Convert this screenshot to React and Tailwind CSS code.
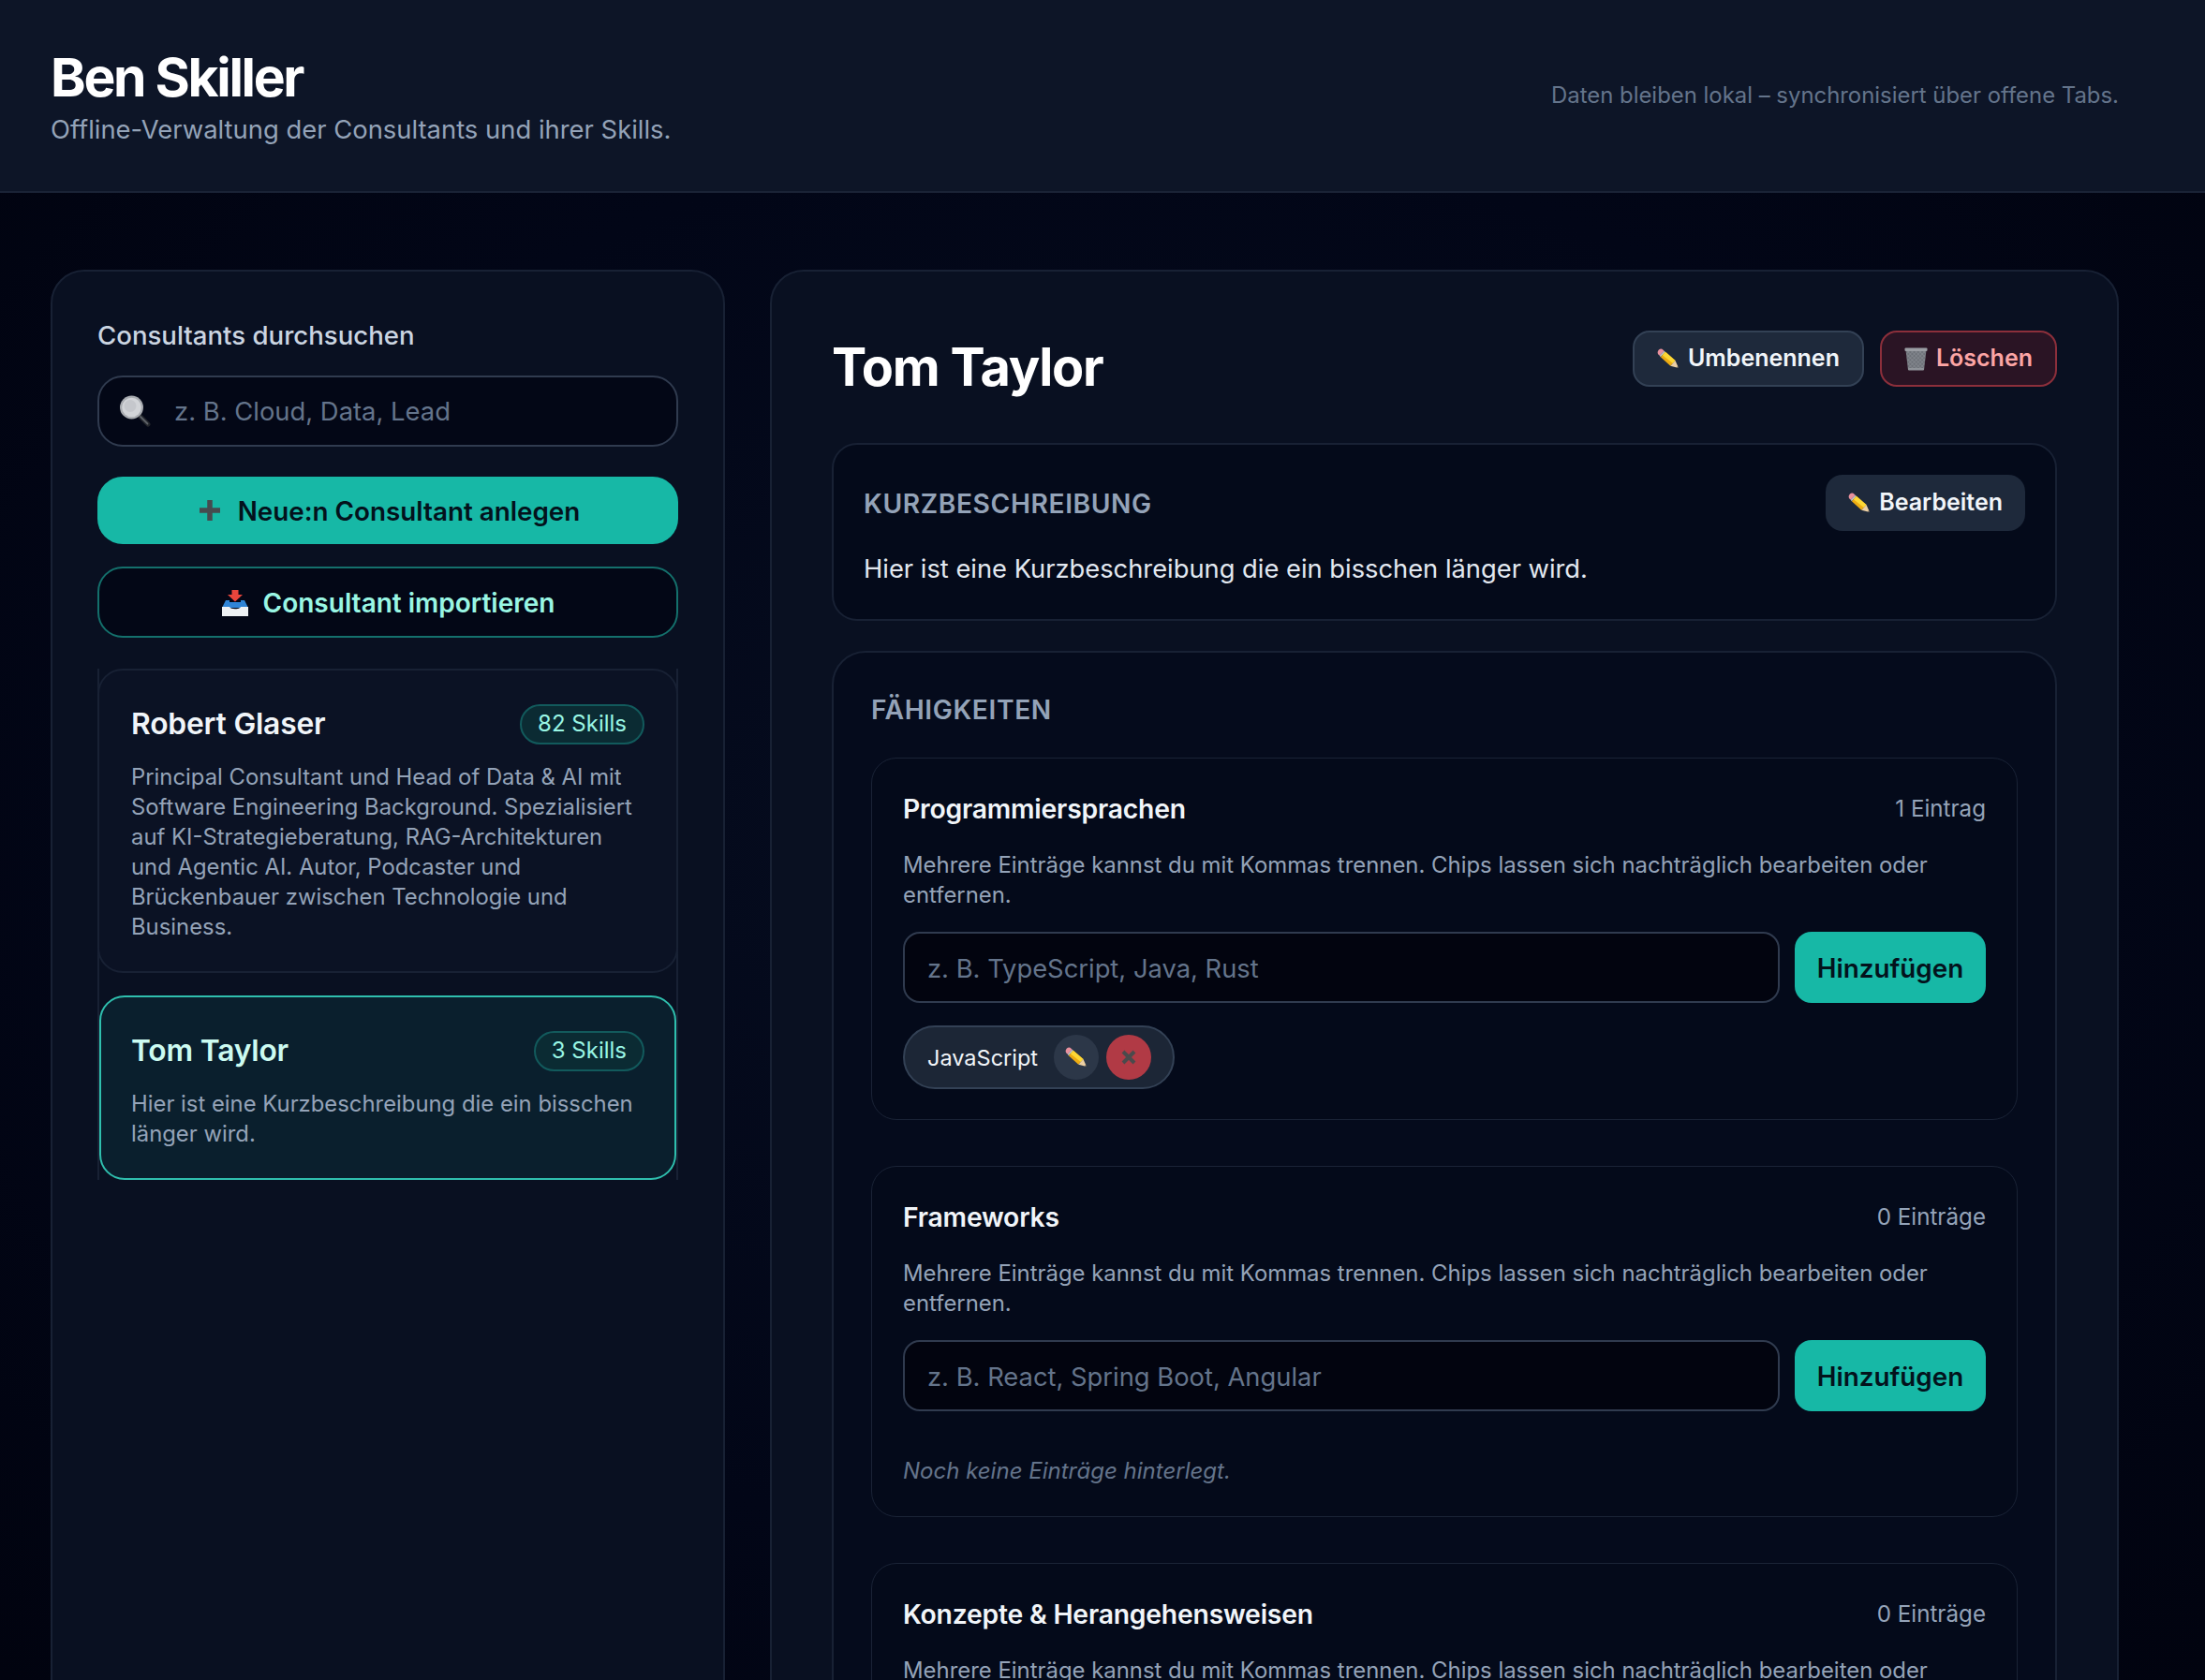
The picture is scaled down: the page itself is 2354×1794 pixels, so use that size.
import React from 'react';

const PencilIcon = ({ size = 24 }) => (
  <svg width={size} height={size} viewBox="0 0 25 23" className="shrink-0">
    <path d="M6.6 1.5 C5.5 0.2 3.4 0.2 2 1.7 C0.5 3.2 0.2 5.4 1.4 6.7 L2.9 8.1 L8 2.9 Z" fill="#e9909d" />
    <path d="M2.9 8.1 L8 2.9 L9.2 3.9 L4 9.6 Z" fill="#bfc5cc" />
    <path d="M4 9.6 L9.2 3.9 L20.3 13.7 L14.9 19.7 Z" fill="#eeac12" />
    <path d="M6 7.6 L9.2 3.9 L20.3 13.7 L17.5 16.7 Z" fill="#fdd835" />
    <path d="M14.9 19.7 L20.3 13.7 L24 22 Z" fill="#edd0a4" />
    <path d="M22 21.5 L24 22 L23.1 19.9 Z" fill="#333333" />
  </svg>
);

const SearchIcon = () => (
  <svg width="34" height="34" viewBox="0 0 34 34" className="shrink-0">
    <path d="M22 22 L31 31" stroke="#23262c" strokeWidth="5" strokeLinecap="round" />
    <path d="M23 23 L30.5 30.5" stroke="#5e6268" strokeWidth="1.8" strokeLinecap="round" />
    <circle cx="13.5" cy="13" r="12.5" fill="#a9acb1" />
    <circle cx="13.5" cy="13" r="10.3" fill="#d2d4d8" />
    <circle cx="12" cy="11.5" r="6.5" fill="#c5c7cc" />
  </svg>
);

const TrashIcon = () => (
  <svg width="25" height="25" viewBox="0 0 25 25" className="shrink-0">
    <defs>
      <pattern id="mesh" width="3" height="3" patternUnits="userSpaceOnUse" patternTransform="rotate(45)">
        <rect width="3" height="3" fill="#6d7178" />
        <path d="M0 0H3M0 0V3" stroke="#8f9399" strokeWidth="1" />
      </pattern>
    </defs>
    <path d="M1.5 3 H23.5 L21 24 H4 Z" fill="url(#mesh)" />
    <rect x="0.5" y="0.5" width="24" height="3.5" rx="1" fill="#9a9da3" />
    <rect x="4" y="22" width="17" height="2.5" rx="1" fill="#8f9399" />
  </svg>
);

const InboxIcon = () => (
  <svg width="30" height="30" viewBox="0 0 30 30" className="shrink-0">
    <path d="M5 12 H9 V17 H21 V12 H25 L29 20 H1 Z" fill="#2f84d6" />
    <path d="M7 14 H23 L25 20 H5 Z" fill="#2f84d6" />
    <path d="M1 19 H9 C10 22 20 22 21 19 H29 V29 H1 Z" fill="#eef1f4" />
    <path d="M11.5 1 H18.5 V6 H23 L15 13.5 L7 6 H11.5 Z" fill="#e8453c" />
  </svg>
);

const PlusIcon = () => (
  <svg width="24" height="24" viewBox="0 0 24 24" className="-mt-[3px] shrink-0">
    <path d="M12 1 V23 M1 12 H23" stroke="#454b4f" strokeWidth="5.5" />
  </svg>
);

const CrossIcon = () => (
  <svg width="16" height="16" viewBox="0 0 16 16">
    <path d="M2 2 L14 14 M14 2 L2 14" stroke="#4a4a4c" strokeWidth="4" />
  </svg>
);

const hint = 'Mehrere Einträge kannst du mit Kommas trennen. Chips lassen sich nachträglich bearbeiten oder entfernen.';

const ConsultantCard = ({ name, skills, text, active }) => (
  <div
    className={
      active
        ? 'mx-[2px] rounded-[27px] border-2 border-[#2fbfae] bg-[#0a1f2d] px-[32px] pt-[35px] pb-[31px]'
        : 'rounded-[27px] border-2 border-[#182134] bg-[#0b1224] px-[34px] pt-[35px] pb-[31px]'
    }
  >
    <div className="flex h-[44px] items-center justify-between">
      <h3 className={active ? 'text-[31.8px] font-semibold tracking-[-0.2px] text-[#ccfbf1]' : 'text-[31.8px] font-semibold tracking-[-0.2px] text-[#f1f5f9]'}>
        {name}
      </h3>
      <span className="flex h-[43px] items-center rounded-full border-2 border-[#125a5c] bg-[#0b2b33] px-[17px] text-[24px] text-[#99f6e4]">
        {skills}
      </span>
    </div>
    <p className="mt-[19px] text-[23.85px] leading-[32px] text-[#94a3b8]">{text}</p>
  </div>
);

const SkillGroup = ({ title, count, placeholder, chips }) => (
  <div className="rounded-[27px] border border-[#1a2336] bg-[#040a1a] px-[33px] pt-[36px] pb-[32px]">
    <div className="flex h-[36px] items-center justify-between">
      <h3 className="text-[28.3px] font-semibold tracking-[-0.2px] text-[#f1f5f9]">{title}</h3>
      <span className="pt-[1px] text-[24.2px] text-[#94a3b8]">{count}</span>
    </div>
    <p className="mt-[26px] text-[23.9px] leading-[32px] text-[#94a3b8]">{hint}</p>
    <div className="mt-[23px] flex gap-[16px]">
      <input
        placeholder={placeholder}
        className="h-[76px] min-w-0 flex-1 rounded-[18px] border-2 border-[#303b4f] bg-[#02040f] px-[24px] pt-[2px] text-[27.35px] text-white placeholder:text-[#64748b] outline-none"
      />
      <button className="h-[76px] w-[204px] rounded-[18px] bg-[#17b8a6] pt-[3px] text-[27.8px] font-semibold text-[#03121c]">Hinzufügen</button>
    </div>
    {chips ? (
      <div className="mt-[24px] flex">
        {chips.map((c) => (
          <div key={c} className="flex h-[68px] items-center rounded-full border-2 border-[#334155] bg-[#1c2636] pl-[24px] pr-[23px]">
            <span className="pt-[1px] text-[23.5px] text-[#f1f5f9]">{c}</span>
            <span className="ml-[17px] flex h-[48px] w-[48px] items-center justify-center rounded-full bg-[#2c3748]"><PencilIcon size={24} /></span>
            <span className="ml-[8px] flex h-[48px] w-[48px] items-center justify-center rounded-full bg-[#b13a45]"><CrossIcon /></span>
          </div>
        ))}
      </div>
    ) : (
      <p className="mt-[48px] text-[24px] italic leading-[32px] text-[#64748b]">Noch keine Einträge hinterlegt.</p>
    )}
  </div>
);

const App = () => (
  <div className="flex h-[1794px] flex-col overflow-hidden bg-[#020617] bg-[radial-gradient(ellipse_at_center,#060d20_0%,#020617_60%,#01030f_100%)] font-['Inter',sans-serif]">
    <header className="flex h-[206px] shrink-0 items-center justify-between border-b-2 border-[#1a2336] bg-[#0d1527] pl-[54px] pr-[92px]">
      <div>
        <h1 className="mt-[1px] text-[57px] font-bold leading-[66px] tracking-[-2.3px] text-white">Ben Skiller</h1>
        <p className="mt-[4px] text-[27.4px] leading-[36px] text-[#94a3b8]">Offline-Verwaltung der Consultants und ihrer Skills.</p>
      </div>
      <p className="text-[23.9px] text-[#64748b]">Daten bleiben lokal – synchronisiert über offene Tabs.</p>
    </header>

    <main className="grid grid-cols-[720px_1fr] gap-[48px] pl-[54px] pr-[92px] pt-[82px]">
      <aside className="rounded-[36px] border-2 border-[#182134] bg-[#091021] px-[48px] pt-[50px] text-[#cbd5e1]">
        <label className="block text-[27.6px] font-medium leading-[36px] text-[#cbd5e1]">Consultants durchsuchen</label>
        <div className="mt-[25px] flex h-[76px] items-center rounded-[27px] border-2 border-[#303b4f] bg-[#030716] pl-[21px]">
          <SearchIcon />
          <input placeholder="z. B. Cloud, Data, Lead" className="ml-[25px] min-w-0 flex-1 bg-transparent pt-[2px] text-[27.4px] text-white placeholder:text-[#64748b] outline-none" />
        </div>
        <button className="mt-[32px] flex h-[72px] w-full items-center justify-center gap-[18px] rounded-[27px] bg-[#17b8a6] pl-[3px] pt-[3px] text-[27.8px] font-semibold text-[#03121c]">
          <PlusIcon />
          Neue:n Consultant anlegen
        </button>
        <button className="mt-[24px] flex h-[76px] w-full items-center justify-center gap-[15px] rounded-[27px] border-2 border-[#14706c] bg-[#030716] pt-[2px] text-[28px] font-semibold text-[#99f6e4]">
          <InboxIcon />
          Consultant importieren
        </button>
        <div className="mt-[33px] flex flex-col gap-[24px] shadow-[inset_2px_0_0_#182134,inset_-2px_0_0_#182134]">
          <ConsultantCard
            name="Robert Glaser"
            skills="82 Skills"
            text="Principal Consultant und Head of Data & AI mit Software Engineering Background. Spezialisiert auf KI-Strategieberatung, RAG-Architekturen und Agentic AI. Autor, Podcaster und Brückenbauer zwischen Technologie und Business."
          />
          <ConsultantCard name="Tom Taylor" skills="3 Skills" active text="Hier ist eine Kurzbeschreibung die ein bisschen länger wird." />
        </div>
      </aside>

      <section className="rounded-[36px] border-2 border-[#182134] bg-[#091021] px-[64px] pt-[63px] pb-[60px]">
        <div className="flex h-[60px] items-center justify-between">
          <h2 className="pt-[18px] text-[55.8px] font-bold tracking-[-1.2px] text-white">Tom Taylor</h2>
          <div className="flex gap-[17px]">
            <button className="flex h-[60px] items-center gap-[9px] rounded-[18px] border-2 border-[#334155] bg-[#1e293b] px-[24px] text-[25px] font-semibold text-[#f1f5f9]">
              <PencilIcon /> Umbenennen
            </button>
            <button className="flex h-[60px] items-center gap-[9px] rounded-[18px] border-2 border-[#8c2f3b] bg-[#2a1424] px-[24px] text-[25px] font-semibold text-[#fca5a5]">
              <TrashIcon /> Löschen
            </button>
          </div>
        </div>

        <div className="mt-[60px] rounded-[27px] border-2 border-[#182134] bg-[#040a1a] px-[32px] pt-[32px] pb-[35px]">
          <div className="flex h-[60px] items-center justify-between">
            <h3 className="pt-[2px] text-[28.2px] font-semibold tracking-[0.6px] text-[#94a3b8]">KURZBESCHREIBUNG</h3>
            <button className="flex h-[60px] items-center gap-[9px] rounded-[18px] bg-[#1e293b] px-[24px] text-[25px] font-semibold text-[#f1f5f9]">
              <PencilIcon /> Bearbeiten
            </button>
          </div>
          <p className="mt-[23px] text-[27.3px] leading-[36px] text-[#e2e8f0]">Hier ist eine Kurzbeschreibung die ein bisschen länger wird.</p>
        </div>

        <div className="mt-[32px] rounded-[36px] border-2 border-[#182134] bg-[#050b1c] px-[40px] pt-[43px] pb-[40px]">
          <h3 className="text-[28.2px] font-semibold leading-[36px] tracking-[0.6px] text-[#94a3b8]">FÄHIGKEITEN</h3>
          <div className="mt-[33px] flex flex-col gap-[49px]">
            <SkillGroup title="Programmiersprachen" count="1 Eintrag" placeholder="z. B. TypeScript, Java, Rust" chips={['JavaScript']} />
            <SkillGroup title="Frameworks" count="0 Einträge" placeholder="z. B. React, Spring Boot, Angular" />
            <SkillGroup title="Konzepte & Herangehensweisen" count="0 Einträge" placeholder="z. B. Clean Code, TDD, DDD" />
          </div>
        </div>
      </section>
    </main>
  </div>
);

export default App;
